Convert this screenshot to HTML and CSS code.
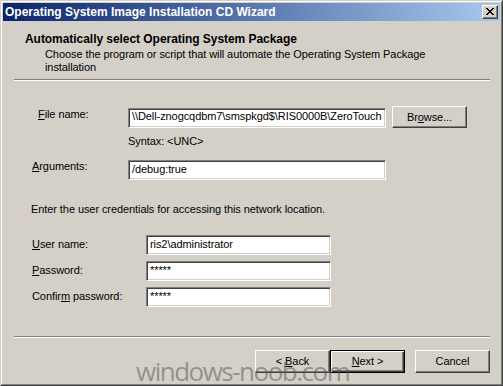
FILE: index.html
```html
<!DOCTYPE html>
<html>
<head>
<meta charset="utf-8">
<link rel="stylesheet" href="styles.css">
</head>
<body>
<div class="window">
  <div class="frame">
    <div class="titlebar">
      <span class="title">Operating System Image Installation CD Wizard</span>
      <span class="close"><svg width="8" height="7" viewBox="0 0 8 7"><path d="M0 0h2v1H0z M6 0h2v1H6z M1 1h2v1H1z M5 1h2v1H5z M2 2h4v1H2z M3 3h2v1H3z M2 4h4v1H2z M1 5h2v1H1z M5 5h2v1H5z M0 6h2v1H0z M6 6h2v1H6z" fill="#000"/></svg></span>
    </div>
    <div class="header">
      <div class="h-title">Automatically select Operating System Package</div>
      <div class="h-sub">Choose the program or script that will automate the Operating System Package<br>installation</div>
    </div>
    <div class="sep"></div>
    <div class="body">
      <div class="row file-row">
        <span class="label"><u>F</u>ile name:</span>
        <div class="field">\\Dell-znogcqdbm7\smspkgd$\RIS0000B\ZeroTouch</div>
        <div class="btn browse">Br<u>o</u>wse...</div>
      </div>
      <div class="syntax">Syntax: &lt;UNC&gt;</div>
      <div class="row args-row">
        <span class="label"><u>A</u>rguments:</span>
        <div class="field">/debug:true</div>
      </div>
      <div class="cred-text">Enter the user credentials for accessing this network location.</div>
      <div class="row cred-row first">
        <span class="label"><u>U</u>ser name:</span>
        <div class="field">ris2\administrator</div>
      </div>
      <div class="row cred-row">
        <span class="label"><u>P</u>assword:</span>
        <div class="field">*****</div>
      </div>
      <div class="row cred-row">
        <span class="label">Confir<u>m</u> password:</span>
        <div class="field">*****</div>
      </div>
    </div>
    <div class="sep bottom"></div>
    <div class="buttons">
      <div class="btn">&lt; <u>B</u>ack</div>
      <div class="btn default"><u>N</u>ext &gt;</div>
      <div class="btn cancel">Cancel</div>
    </div>
  </div>
  <div class="watermark">windows-noob.com</div>
</div>
</body>
</html>
```

FILE: styles.css
```css
html, body {
  margin: 0;
  padding: 0;
  background: #D4D0C8;
}
body {
  font-family: "Liberation Sans", Arial, sans-serif;
  font-size: 11px;
  line-height: 13px;
  color: #000;
  letter-spacing: -0.08px;
}
u { text-decoration: underline; text-underline-offset: 1px; }

.window {
  position: relative;
  width: 503px;
  height: 386px;
  box-sizing: border-box;
  background: #D4D0C8;
  border: 1px solid;
  border-color: #D4D0C8 #404040 #404040 #D4D0C8;
  overflow: hidden;
}
.frame {
  height: 100%;
  box-sizing: border-box;
  border: 1px solid;
  border-color: #fff #808080 #808080 #fff;
  display: flex;
  flex-direction: column;
}

.titlebar {
  margin: 1px 1px 0 1px;
  height: 18px;
  background: linear-gradient(to right, #0A246A, #A6CAF0);
  display: flex;
  align-items: center;
  justify-content: space-between;
  padding: 0 2px;
}
.title {
  color: #fff;
  font-weight: bold;
  font-size: 12px;
  line-height: 18px;
  letter-spacing: 0;
}
.close {
  width: 16px;
  height: 14px;
  box-sizing: border-box;
  background: #D4D0C8;
  border: 1px solid;
  border-color: #fff #404040 #404040 #fff;
  box-shadow: inset -1px -1px #808080;
  display: flex;
  align-items: center;
  justify-content: center;
}
.close svg { display: block; margin: 0 1px 1px 0; }

.header {
  padding: 11px 0 0 23px;
}
.h-title {
  font-weight: bold;
  font-size: 12px;
  line-height: 14px;
  letter-spacing: -0.05px;
}
.h-sub {
  margin: 2px 0 0 20px;
}
.sep {
  height: 0;
  border-top: 1px solid #808080;
  border-bottom: 1px solid #fff;
  margin: 5px 11px 0 12px;
}
.sep.bottom {
  margin-top: auto;
}

.body {
  display: flex;
  flex-direction: column;
}
.row {
  display: flex;
  align-items: flex-start;
}
.label { flex: none; }
.field {
  flex: none;
  box-sizing: border-box;
  height: 20px;
  background: #fff;
  border: 1px solid;
  border-color: #808080 #fff #fff #808080;
  box-shadow: inset 1px 1px #404040, inset -1px -1px #D4D0C8;
  padding: 2px 2px 0 3px;
  white-space: nowrap;
  overflow: hidden;
}
.btn {
  flex: none;
  box-sizing: border-box;
  width: 75px;
  height: 23px;
  background: #D4D0C8;
  border: 1px solid;
  border-color: #fff #404040 #404040 #fff;
  box-shadow: inset -1px -1px #808080;
  text-align: center;
  line-height: 21px;
}

.file-row { margin-top: 25px; }
.file-row .label { margin: 2px 0 0 36px; width: 90px; }
.file-row .field { margin-top: 2px; width: 258px; padding-top: 1px; }
.browse { margin-left: 6px; height: 22px; line-height: 20px; }

.syntax { margin: 7px 0 0 126px; }

.args-row { margin-top: 12px; }
.args-row .label { margin-left: 30px; width: 96px; }
.args-row .field { width: 258px; }

.cred-text { margin: 23px 0 0 29px; }

.cred-row { margin-top: 6px; }
.cred-row.first { margin-top: 19px; }
.cred-row .label { margin: 3px 0 0 30px; width: 114px; }
.cred-row .field { width: 185px; }

.buttons {
  display: flex;
  justify-content: flex-end;
  margin-top: 12px;
  padding: 0 11px 11px 0;
}
.btn.default {
  border-color: #000;
  box-shadow: inset 1px 1px #fff, inset -1px -1px #404040, inset -2px -2px #808080;
}
.btn.cancel { margin-left: 10px; }

.watermark {
  position: absolute;
  left: 135px;
  top: 357px;
  font-family: "Open Sans", "Liberation Sans", sans-serif;
  font-size: 26px;
  line-height: 26px;
  letter-spacing: -1.5px;
  color: rgba(80, 80, 80, 0.5);
  white-space: nowrap;
  pointer-events: none;
}
```
